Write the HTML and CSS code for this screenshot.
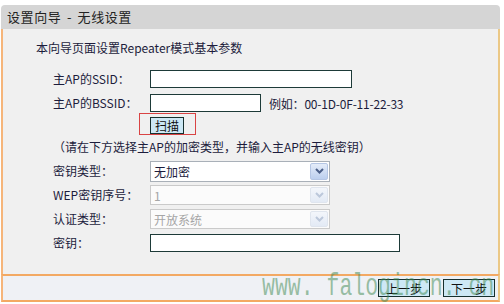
FILE: index.html
```html
<!DOCTYPE html>
<html lang="zh-CN">

<head>
    <meta charset="UTF-8">
    <title>设置向导 - 无线设置</title>
    <link rel="stylesheet" href="styles.css">
</head>

<body>
    <div class="wizard">
        <div class="title">设置向导 - 无线设置</div>

        <div class="panel">
            <div class="intro">本向导页面设置Repeater模式基本参数</div>

            <div class="form">
                <div class="row">
                    <label class="label">主AP的SSID：</label>
                    <input class="text ssid" type="text">
                </div>
                <div class="row">
                    <label class="label">主AP的BSSID：</label>
                    <input class="text bssid" type="text">
                    <span class="hint">例如：00-1D-0F-11-22-33</span>
                </div>
                <div class="scan-row">
                    <div class="scan-box">
                        <button class="btn scan">扫描</button>
                    </div>
                </div>
                <div class="note">（请在下方选择主AP的加密类型，并输入主AP的无线密钥）</div>
                <div class="row">
                    <label class="label">密钥类型：</label>
                    <div class="select big">
                        <span class="value">无加密</span>
                        <span class="arrow">
                            <svg width="9" height="6" viewBox="0 0 9 6"><path d="M1 1 L4.5 4.5 L8 1" fill="none" stroke="currentColor" stroke-width="2"/></svg>
                        </span>
                    </div>
                </div>
                <div class="row">
                    <label class="label">WEP密钥序号：</label>
                    <div class="select disabled">
                        <span class="value">1</span>
                        <span class="arrow">
                            <svg width="9" height="6" viewBox="0 0 9 6"><path d="M1 1 L4.5 4.5 L8 1" fill="none" stroke="currentColor" stroke-width="2"/></svg>
                        </span>
                    </div>
                </div>
                <div class="row">
                    <label class="label">认证类型：</label>
                    <div class="select disabled">
                        <span class="value">开放系统</span>
                        <span class="arrow">
                            <svg width="9" height="6" viewBox="0 0 9 6"><path d="M1 1 L4.5 4.5 L8 1" fill="none" stroke="currentColor" stroke-width="2"/></svg>
                        </span>
                    </div>
                </div>
                <div class="row">
                    <label class="label">密钥：</label>
                    <input class="text key" type="text">
                </div>
            </div>
        </div>

        <div class="footer">
            <button class="btn step">上一步</button>
            <button class="btn step">下一步</button>
        </div>

        <div class="watermark">www. falogincn. cn</div>
    </div>
</body>

</html>
```

FILE: styles.css
```css
body {
    margin: 0;
    background: #fff;
    font-family: "Noto Sans CJK SC", "DejaVu Sans", sans-serif;
    font-size: 12px;
    color: #1c1c3c;
}

.wizard {
    position: relative;
    width: 499px;
    margin: 5px 0 0 1px;
}

.title {
    height: 24px;
    line-height: 23px;
    padding-left: 6px;
    background: #d5d5d5;
    border-radius: 4px 4px 0 0;
    font-size: 13px;
    letter-spacing: 0.6px;
    word-spacing: 2px;
    color: #222;
}

.panel {
    height: 234px;
    padding-top: 11px;
    background: #f0f0f0;
    border-left: 2px solid #f6b57a;
    border-right: 2px solid #ebc886;
}

.intro {
    margin-left: 33px;
    line-height: 16px;
}

.form {
    margin-top: 11px;
    padding-left: 50px;
}

.row {
    display: flex;
    align-items: center;
    height: 24px;
}

.label {
    width: 97px;
    flex: none;
    line-height: 16px;
}

.text {
    box-sizing: border-box;
    height: 18px;
    margin: 0;
    padding: 0 3px;
    border: 1px solid #1d3a38;
    background: #fff;
    font: inherit;
}

.ssid {
    width: 202px;
}

.bssid {
    width: 111px;
}

.key {
    width: 250px;
}

.hint {
    margin-left: 8px;
    letter-spacing: -0.2px;
}

.scan-row {
    margin-top: -2px;
    padding-left: 86px;
}

.scan-box {
    box-sizing: border-box;
    width: 57px;
    height: 22px;
    padding: 3px 0 0 10px;
    border: 1px solid #d94343;
}

.btn {
    box-sizing: border-box;
    margin: 0;
    padding: 0;
    border: 1px solid #17302e;
    background: #cde8f5;
    font: inherit;
    color: #111;
    line-height: 15px;
}

.scan {
    width: 34px;
    height: 17px;
}

.note {
    margin: 4px 0 4px 0;
    line-height: 16px;
}

.select {
    box-sizing: border-box;
    display: flex;
    align-items: stretch;
    width: 180px;
    height: 20px;
    padding: 1px;
    border: 1px solid #a9b0b8;
    background: #fff;
}

.select.big {
    height: 21px;
}

.select .value {
    flex: 1;
    padding-left: 2px;
    line-height: 17px;
}

.select .arrow {
    display: flex;
    align-items: center;
    justify-content: center;
    width: 16px;
    border: 1px solid #b5c6e4;
    border-radius: 2px;
    background: linear-gradient(#e4ecf9, #bccfee);
    color: #4b5f88;
}

.select.disabled {
    border-color: #cacaca;
    background: #fbfbfb;
}

.select.disabled .value {
    color: #a6a6a6;
}

.select.disabled .arrow {
    border-color: #dfe5ee;
    background: linear-gradient(#f3f6fb, #e3eaf5);
    color: #bcc8db;
}

.footer {
    display: flex;
    justify-content: flex-end;
    gap: 13px;
    height: 21px;
    padding: 3px 3px 0 0;
    background: #eff1f5;
    border: 2px solid #f3a963;
    border-left-color: #f6b57a;
    border-right-color: #ebc886;
}

.step {
    width: 52px;
    height: 18px;
}

.watermark {
    position: absolute;
    left: 261px;
    top: 265px;
    font-family: "Liberation Mono", monospace;
    font-size: 21.5px;
    line-height: 22px;
    white-space: pre;
    color: rgba(60, 135, 80, 0.5);
    transform: scaleY(1.45);
    transform-origin: left top;
    pointer-events: none;
}
```
